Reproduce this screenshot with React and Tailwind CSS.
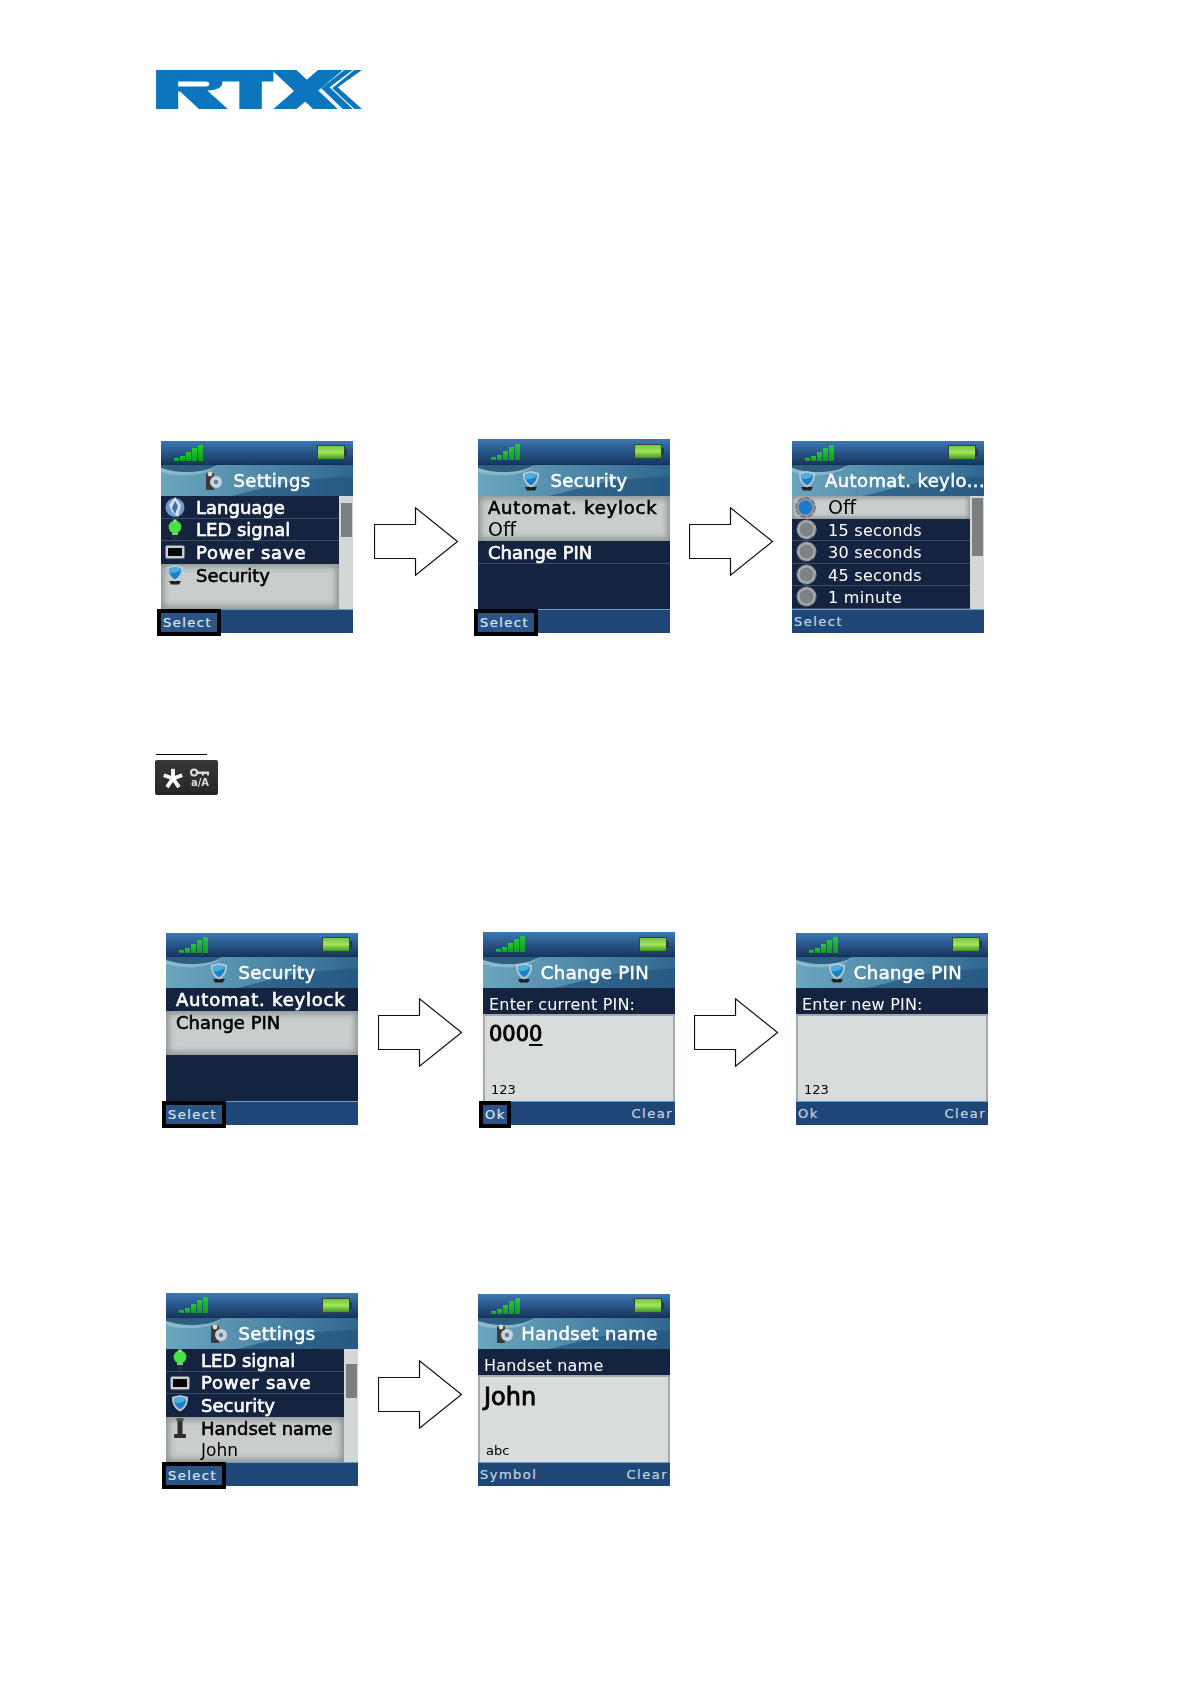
import { useId } from "react";

const FONT = "[font-family:'DejaVu_Sans',sans-serif]";

// --- little handset icons ---
function GearIcon() {
  return (
    <svg width="18" height="20" viewBox="0 0 18 20" className="shrink-0">
      <rect x="1" y="2" width="8" height="17" rx="1" fill="#3a3a3a" />
      <circle cx="11" cy="11" r="6" fill="#c9d3dc" />
      <circle cx="11" cy="11" r="2.2" fill="#5f7d96" />
      <circle cx="5" cy="3" r="2.4" fill="#e4d6c8" />
    </svg>
  );
}

function ShieldIcon({ w = 18, h = 21 }) {
  return (
    <svg width={w} height={h} viewBox="0 0 18 21" className="shrink-0">
      <path d="M3 17 L15 17 L13 20.5 L5 20.5 Z" fill="#1c1f24" />
      <path d="M1 3 L9 1 L17 3 C17.5 10 14 15 9 17.5 C4 15 0.5 10 1 3 Z" fill="#b9c9d4" />
      <path d="M3 4.5 L9 3 L15 4.5 C15.5 9.5 12.5 13.5 9 15.3 C5.5 13.5 2.5 9.5 3 4.5 Z" fill="#1a82c4" />
      <path d="M3 4.5 L9 3 L15 4.5 C14.5 7 9 10 3.5 9 Z" fill="#4aaee0" />
    </svg>
  );
}

function GlobeIcon() {
  return (
    <svg width="20" height="22" viewBox="0 0 20 22">
      <circle cx="10" cy="11.5" r="9.5" fill="#6f9bcb" />
      <path d="M10 1 L16 9 L13 21 L7 16 L4 9 Z" fill="#d3e0ee" />
      <path d="M10 5 L13 10 L10 18 L7 12 Z" fill="#3f6ea6" />
    </svg>
  );
}

function LedIcon() {
  return (
    <svg width="16" height="22" viewBox="0 0 16 22">
      <rect x="6" y="13" width="4" height="8" fill="#20302a" />
      <circle cx="8" cy="8" r="6.4" fill="#4be044" />
      <rect x="6.5" y="0.5" width="3" height="2.5" fill="#9fe89a" />
      <rect x="5" y="14" width="6" height="2" fill="#9fb39a" />
    </svg>
  );
}

function PowerIcon() {
  return (
    <svg width="20" height="14" viewBox="0 0 20 14" className="mt-[4px]">
      <rect x="0.5" y="0.5" width="19" height="13" rx="1.5" fill="#c6ccd0" />
      <rect x="3" y="3" width="14" height="8" fill="#050505" />
    </svg>
  );
}

function HandsetIcon() {
  return (
    <svg width="14" height="22" viewBox="0 0 14 22">
      <rect x="4.5" y="1" width="5" height="16" fill="#2d2d2d" />
      <rect x="3.5" y="1" width="7" height="3" fill="#555" />
      <rect x="1" y="17" width="12" height="4" rx="1" fill="#2d2d2d" />
    </svg>
  );
}

function RadioIcon({ on }) {
  return (
    <svg width="21" height="21" viewBox="0 0 20 20">
      <circle cx="10" cy="10" r="9.4" fill={on ? "#8f9599" : "#a6abae"} />
      <circle cx="10" cy="10" r="9.2" fill="none" stroke="#5a6068" strokeWidth="1" strokeDasharray="5 2" />
      <circle cx="10" cy="10" r="6.6" fill={on ? "#1e78cc" : "#7d8285"} />
    </svg>
  );
}

function Signal() {
  const bars = [3, 5, 9, 13, 16];
  return (
    <div className="flex items-end gap-[1px] h-[16px]">
      {bars.map((h, i) => (
        <div key={i} className="w-[5px] bg-gradient-to-b from-[#22cc2e] to-[#129a22]" style={{ height: h }} />
      ))}
    </div>
  );
}

function Battery() {
  return (
    <div className="flex items-center">
      <div className="w-[28px] h-[15px] border border-[#33424a] bg-gradient-to-b from-[#6fc83a] via-[#a2e45c] to-[#3a9a22]" />
      <div className="w-[2px] h-[7px] bg-[#2a3a4a]" />
    </div>
  );
}

// the swoosh drawn on the title bar background
function Swoosh() {
  const id = useId();
  return (
    <svg className="absolute inset-0 w-full h-full" viewBox="0 0 192 32" preserveAspectRatio="none">
      <defs>
        <linearGradient id={id} x1="0" y1="0" x2="1" y2="0">
          <stop offset="0" stopColor="#6ba6bf" />
          <stop offset="0.5" stopColor="#4f89a8" />
          <stop offset="1" stopColor="#2f6790" />
        </linearGradient>
      </defs>
      <rect width="192" height="32" fill={`url(#${id})`} />
      <path d="M0 0 H56 C44 8 20 10 0 3 Z" fill="#2f5f80" />
      <path d="M0 3 C20 10 44 8 56 1 C44 12 16 13 0 7 Z" fill="#a9cddb" opacity="0.55" />
      <path d="M70 32 C100 26 120 14 192 12 V32 Z" fill="#24557f" opacity="0.7" />
    </svg>
  );
}

function Row({ icon, children, dim, line = true, pl = "pl-[35px]" }) {
  return (
    <div className={`relative h-[22.5px] ${pl} flex items-center whitespace-nowrap text-white leading-none ${dim ? "pt-[3px] text-[16px] tracking-[0.3px]" : "pt-[2px] text-[18px] [-webkit-text-stroke:0.6px_currentColor]"} ${line ? "border-b border-[#3c4c62]" : ""}`}>
      {icon && <span className="absolute left-[2px] w-[24px] flex justify-center top-0">{icon}</span>}
      {children}
    </div>
  );
}

function Selected({ icon, h, children, sub, subSize = "text-[17px]", pl = "pl-[35px]" }) {
  return (
    <div className={`relative ${h} ${pl} bg-[#c9cdcd] shadow-[inset_0_0_6px_3px_#8d9293] text-black whitespace-nowrap`}>
      {icon && <span className="absolute left-[2px] top-0 w-[24px] flex justify-center">{icon}</span>}
      <div className="h-[22.5px] pt-[2px] flex items-center text-[18px] leading-none [-webkit-text-stroke:0.6px_currentColor]">{children}</div>
      {sub && <div className={`h-[22px] flex items-center ${subSize} leading-none`}>{sub}</div>}
    </div>
  );
}

function Scrollbar({ thumb }) {
  return (
    <div className="w-[14px] shrink-0 bg-[#d3d7d7] pl-[2px] pr-[1px] h-full">
      <div className={`${thumb} bg-[#7b7f82]`} />
    </div>
  );
}

function Softkey({ children, box }) {
  if (box) {
    return (
      <span className={`absolute -left-[4px] -top-[1px] h-[27px] ${box} border-[4px] border-black bg-[#2a5488] text-[#dbe7f0] flex items-center pl-[2px] pb-[1px] leading-none`}>
        {children}
      </span>
    );
  }
  return <span className="text-[#c9d6e2] leading-none">{children}</span>;
}

function Screen({ title, titleIcon, titleClass = "justify-center pl-[2px] gap-[10px]", status = "h-[23px]", left, right, box, children }) {
  return (
    <div className={`w-[192px] shrink-0 flex flex-col ${FONT}`}>
      <div className={`${status} bg-gradient-to-b from-[#3d78b4] to-[#173760] flex items-center justify-between pl-[13px] pr-[6px] blur-[0.4px]`}>
        <Signal />
        <Battery />
      </div>
      <div className={`relative h-[32px] flex items-center ${titleClass} text-white text-[18px] tracking-[0.4px] blur-[0.4px] border-t border-[#14305a]`}>
        <Swoosh />
        <span className="relative">{titleIcon}</span>
        <span className="relative whitespace-nowrap leading-none [-webkit-text-stroke:0.5px_currentColor]">{title}</span>
      </div>
      <div className="h-[113px] bg-[#14233f] overflow-hidden blur-[0.4px]">{children}</div>
      <div className="relative h-[24px] bg-[#1e4676] border-t border-[#6b9ccb] flex items-center justify-between px-[2px] pb-[1px] text-[13px] tracking-[1.5px] [-webkit-text-stroke:0.2px_currentColor]">
        <Softkey box={box}>{left}</Softkey>
        {box && <span />}
        {right && <Softkey>{right}</Softkey>}
      </div>
    </div>
  );
}

// grey text entry screen body
function Entry({ prompt, value, mode }) {
  return (
    <div className="h-full flex flex-col">
      <div className="h-[26px] flex items-end pb-[1px] pl-[6px] text-white text-[16px] tracking-[0.2px] leading-none whitespace-nowrap">{prompt}</div>
      <div className="flex-1 bg-[#d9dcdd] border-x-[2px] border-t-[2px] border-[#a5a9ab] pl-[4px] flex flex-col justify-between pb-[5px] text-black">
        <div className="pt-[8px]">{value}</div>
        <div className="text-[13px] leading-none pl-[2px]">{mode}</div>
      </div>
    </div>
  );
}

function Arrow({ className }) {
  return (
    <svg width="85" height="69" viewBox="0 0 85 69" className={`shrink-0 ${className}`}>
      <path d="M0.5 17.5 H41.5 V0.8 L83.5 34.5 L41.5 68.2 V51.5 H0.5 Z" fill="#fff" stroke="#111" strokeWidth="1.2" />
    </svg>
  );
}

function Logo() {
  return (
    <svg width="208" height="39" viewBox="45 60 623 118" className="block blur-[0.5px]">
      <g fill="#0b76bd">
        {/* R running into the T bar */}
        <path
          fillRule="evenodd"
          d="M45 60 H400 V95 H365 V178 H297 V95 H245 C248 110 235 120 200 122 L262 178 H175 L118 125 H112 V178 H45 Z M112 95 V110 H195 C210 110 210 95 195 95 Z"
        />
        {/* X and the chevrons */}
        <path d="M395 60 H470 L595 178 H520 Z" />
        <path d="M400 178 H470 L610 60 H535 Z" />
        <path d="M615 60 H640 L570 112 L640 178 H610 L545 115 Z" />
        <path d="M645 60 H668 L595 112 L668 178 H645 L578 115 Z" />
      </g>
    </svg>
  );
}

function KeylockIcon() {
  return (
    <div className="w-[63px] h-[35px] mt-[5px] rounded-[2px] bg-gradient-to-b from-[#383838] to-[#262626] flex items-center pl-[7px] gap-[6px] blur-[0.3px]">
      <svg width="22" height="22" viewBox="0 0 24 24">
        <g stroke="#fff" strokeWidth="4.2" fill="none">
          <path d="M12 2 V13" />
          <path d="M2 9 L12 12.5 L22 9" />
          <path d="M5.5 22 L12 12.5 L18.5 22" />
        </g>
      </svg>
      <div className="flex flex-col items-center">
        <svg width="20" height="9" viewBox="0 0 20 9">
          <circle cx="4" cy="4.5" r="3" fill="none" stroke="#ddd" strokeWidth="2" />
          <path d="M7 3.5 H19 V7.5 H17 V6 H14 V7.5 H12 V6 H7 Z" fill="#ddd" />
        </svg>
        <span className={`text-[10px] leading-[11px] font-bold text-[#ddd] ${FONT}`}>a/A</span>
      </div>
    </div>
  );
}

const RADIO_ROWS = ["15 seconds", "30 seconds", "45 seconds", "1 minute"];

export default function App() {
  return (
    <div className="w-[1191px] h-[1684px] bg-white overflow-hidden pt-[70px]">
      <div className="pl-[155px]">
        <Logo />
      </div>

      {/* first row */}
      <div className="mt-[330px] flex items-end pl-[161px]">
        <Screen title="Settings" titleIcon={<GearIcon />} left="Select" box="w-[64px]">
          <div className="flex h-full">
            <div className="flex-1 min-w-0">
              <Row icon={<GlobeIcon />}>Language</Row>
              <Row icon={<LedIcon />}>LED signal</Row>
              <Row icon={<PowerIcon />} line={false}><span className="tracking-[0.8px]">Power save</span></Row>
              <Selected icon={<ShieldIcon />} h="h-[45.5px]">Security</Selected>
            </div>
            <Scrollbar thumb="mt-[7px] h-[34px]" />
          </div>
        </Screen>
        <Arrow className="ml-[21px] mb-[57px]" />
        <div className="ml-[19px]">
          <Screen title="Security" titleIcon={<ShieldIcon />} status="h-[25px]" left="Select" box="w-[64px]">
            <Selected h="h-[45px]" pl="pl-[10px]" sub="Off" subSize="text-[19px]"><span className="tracking-[0.8px]">Automat. keylock</span></Selected>
            <Row pl="pl-[10px]">Change PIN</Row>
          </Screen>
        </div>
        <Arrow className="ml-[19px] mb-[57px]" />
        <div className="ml-[18px]">
          <Screen title="Automat. keylo..." titleIcon={<ShieldIcon />} titleClass="pl-[6px] gap-[9px]" left="Select">
            <div className="flex h-full">
              <div className="flex-1 min-w-0">
                <div className="relative h-[22.5px] bg-[#c9cdcd] shadow-[inset_0_0_4px_2px_#8d9293] pl-[36px] flex items-center text-[19px] text-black leading-none">
                  <span className="absolute left-[3px] top-[1px]"><RadioIcon on /></span>
                  Off
                </div>
                {RADIO_ROWS.map((r) => (
                  <Row key={r} dim pl="pl-[36px]" icon={<RadioIcon />}>{r}</Row>
                ))}
              </div>
              <Scrollbar thumb="mt-[2px] h-[58px]" />
            </div>
          </Screen>
        </div>
      </div>

      {/* key lock note */}
      <div className="mt-[121px] pl-[156px]">
        <div className="w-[51px] h-px bg-black" />
        <div className="-ml-[1px]">
          <KeylockIcon />
        </div>
      </div>

      {/* second row */}
      <div className="mt-[137px] flex items-end pl-[166px]">
        <Screen title="Security" titleIcon={<ShieldIcon />} left="Select" box="w-[64px]">
          <Row pl="pl-[10px]" line={false}><span className="tracking-[0.8px]">Automat. keylock</span></Row>
          <Selected h="h-[44px]" pl="pl-[10px]">Change PIN</Selected>
        </Screen>
        <Arrow className="ml-[20px] mb-[58px]" />
        <div className="ml-[20px]">
          <Screen title="Change PIN" titleIcon={<ShieldIcon />} titleClass="justify-center pl-[6px] gap-[8px]" status="h-[24px]" left="Ok" right="Clear" box="w-[32px]">
            <Entry
              prompt="Enter current PIN:"
              mode="123"
              value={<span className="text-[21px] leading-none [-webkit-text-stroke:0.9px_currentColor]">000<span className="underline underline-offset-[3px]">0</span></span>}
            />
          </Screen>
        </div>
        <Arrow className="ml-[19px] mb-[58px]" />
        <div className="ml-[17px]">
          <Screen title="Change PIN" titleIcon={<ShieldIcon />} titleClass="justify-center pl-[6px] gap-[8px]" left="Ok" right="Clear">
            <Entry prompt="Enter new PIN:" mode="123" value={null} />
          </Screen>
        </div>
      </div>

      {/* third row */}
      <div className="mt-[168px] flex items-end pl-[166px]">
        <Screen title="Settings" titleIcon={<GearIcon />} status="h-[24px]" left="Select" box="w-[64px]">
          <div className="flex h-full">
            <div className="flex-1 min-w-0">
              <Row icon={<LedIcon />}>LED signal</Row>
              <Row icon={<PowerIcon />}><span className="tracking-[0.8px]">Power save</span></Row>
              <Row icon={<ShieldIcon />} line={false}>Security</Row>
              <Selected icon={<HandsetIcon />} h="h-[45.5px]" sub="John">Handset name</Selected>
            </div>
            <Scrollbar thumb="mt-[15px] h-[34px]" />
          </div>
        </Screen>
        <Arrow className="ml-[20px] mb-[57px]" />
        <div className="ml-[15px]">
          <Screen title="Handset name" titleIcon={<GearIcon />} left="Symbol" right="Clear" titleClass="justify-center pl-[6px] gap-[7px]">
            <Entry
              prompt="Handset name"
              mode="abc"
              value={<span className="text-[24px] leading-none [-webkit-text-stroke:0.9px_currentColor]">John</span>}
            />
          </Screen>
        </div>
      </div>
    </div>
  );
}
